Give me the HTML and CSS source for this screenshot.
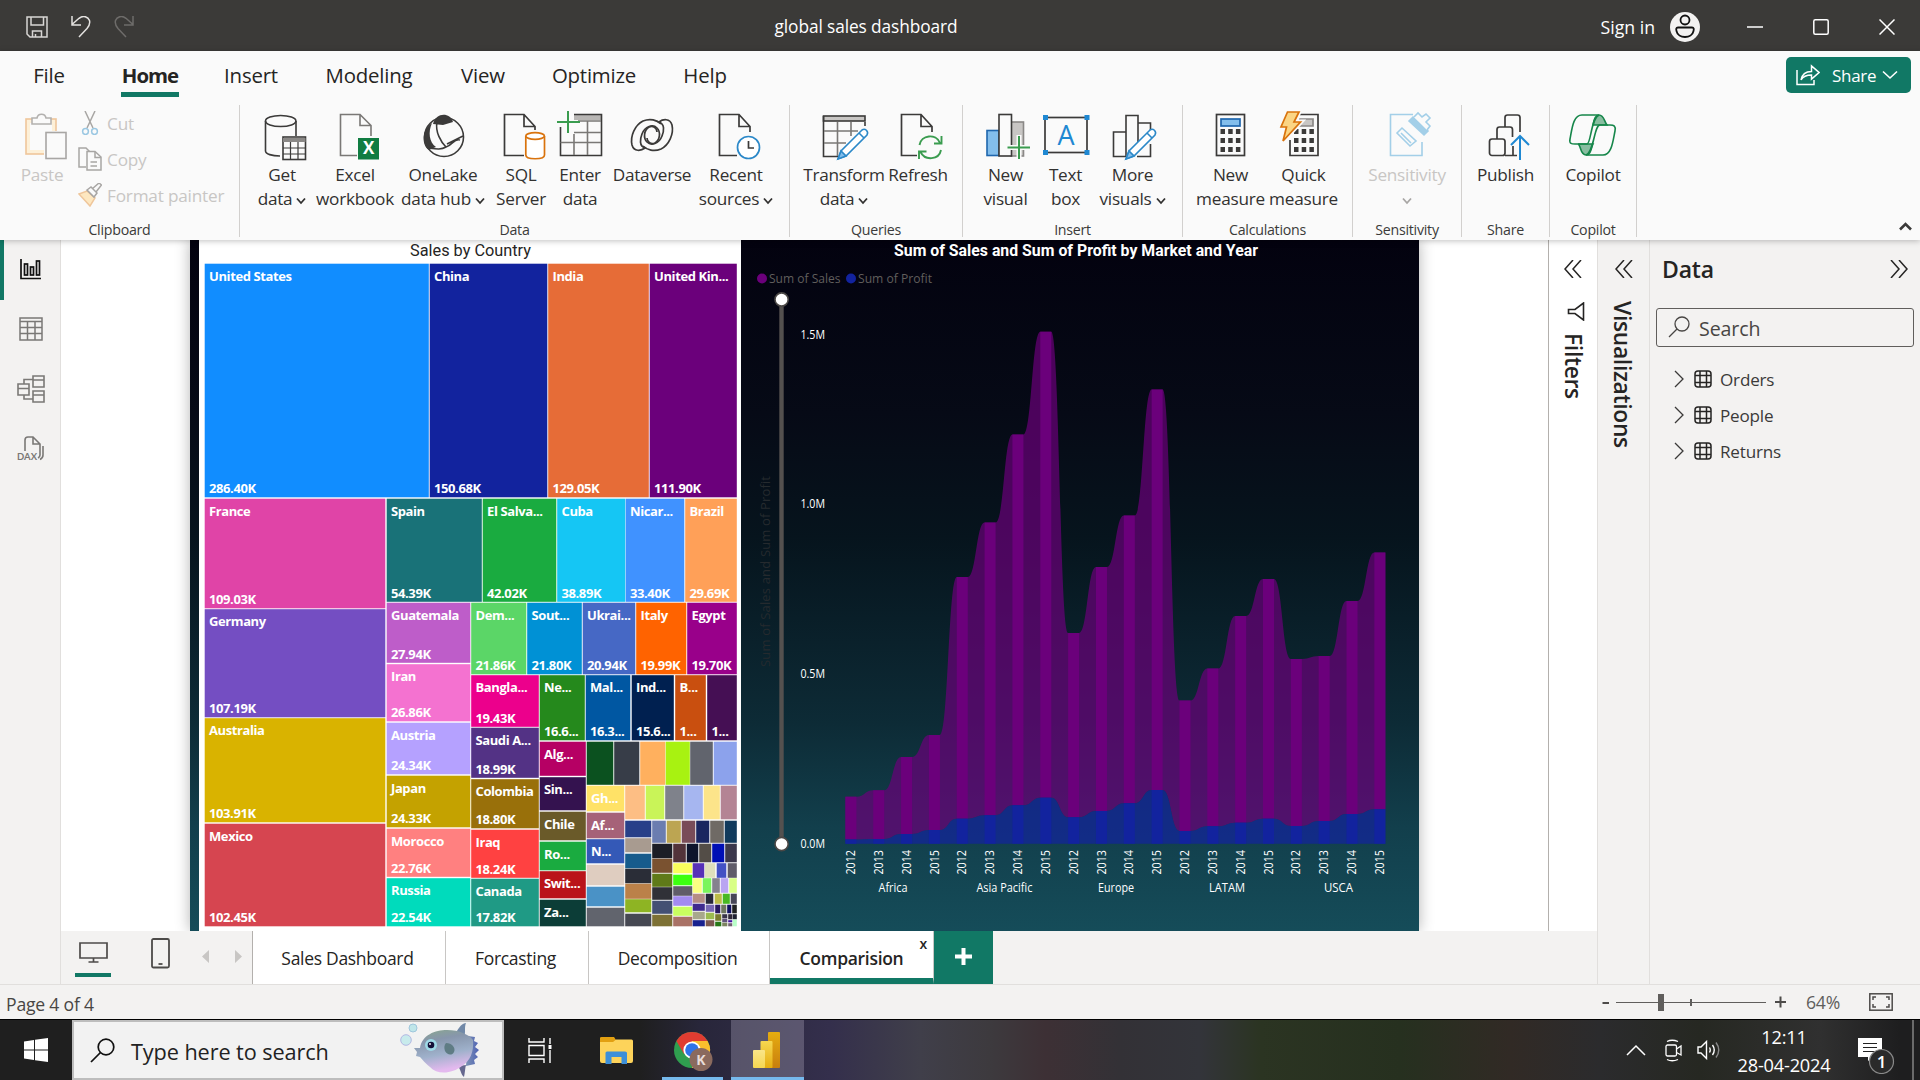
FILE: index.html
```html
<!DOCTYPE html>
<html lang="en">
<head>
<meta charset="utf-8">
<title>global sales dashboard</title>
<link rel="stylesheet" href="styles.css">
</head>
<body>
<svg class="defs" width="0" height="0">
  <symbol id="dbl" viewBox="0 0 18 18"><path d="M9 0L1 9L9 18M17 0L9 9L17 18" fill="none" stroke="#252423" stroke-width="1.5"/></symbol>
  <symbol id="chev" viewBox="0 0 10 8"><path d="M1 1.5L5 6L9 1.5" fill="none" stroke="currentColor" stroke-width="1.8"/></symbol>
  <symbol id="tbl" viewBox="0 0 18 18"><g fill="none" stroke="#252423" stroke-width="1.5"><rect x="1" y="1" width="16" height="16" rx="3"/><path d="M6 1V17M12.5 1V17M1 5.5H17M1 12.5H17"/></g></symbol>
</svg>

<header class="titlebar">
  <div class="quick">
    <svg width="22" height="22" viewBox="0 0 22 22" fill="none" stroke="#d8d6d4" stroke-width="1.5"><path d="M1 1H21V21H4L1 18ZM5 1V9H17.500V1M6.500 21V15H15.500V21M9.500 18V21"/></svg>
    <svg width="20" height="22" viewBox="0 0 20 22" fill="none" stroke="#e4e2e0" stroke-width="1.500"><path d="M1 0V9H10M1 8.500L8 2.300C12-1 17 .5 18.500 4.500C19.500 8 18 10 16 12.500L8 21"/></svg>
    <svg width="20" height="22" viewBox="0 0 20 22" fill="none" stroke="#6e6c6a" stroke-width="1.500"><path d="M19 0V9H10M19 8.500L12 2.300C8-1 3 .5 1.500 4.500C.5 8 2 10 4 12.500L12 21"/></svg>
  </div>
  <div class="doc-title">global sales dashboard</div>
  <div class="account">
    <span class="signin">Sign in</span>
    <svg width="30" height="30" viewBox="0 0 30 30"><circle cx="15" cy="15" r="15" fill="#f3f2f1"/><g fill="none" stroke="#111" stroke-width="1.800"><circle cx="15" cy="8" r="4.500"/><path d="M8 15.500H22C24 15.500 24 17 23.500 19C22 27 8 27 6.500 19C6 17 6 15.500 8 15.500Z"/></g></svg>
    <svg width="16" height="16" viewBox="0 0 16 16"><path d="M0 8H16" stroke="#fff" stroke-width="1.500"/></svg>
    <svg width="16" height="16" viewBox="0 0 16 16"><rect x=".8" y=".8" width="14.400" height="14.400" rx="1.500" fill="none" stroke="#fff" stroke-width="1.500"/></svg>
    <svg width="16" height="16" viewBox="0 0 16 16"><path d="M.5 .5L15.500 15.500M15.500 .5L.5 15.500" stroke="#fff" stroke-width="1.500"/></svg>
  </div>
</header>

<section class="ribbon">
  <nav class="tabs">
    <span class="tab t-file">File</span><span class="tab t-home">Home</span><span class="tab t-insert">Insert</span><span class="tab t-model">Modeling</span><span class="tab t-view">View</span><span class="tab t-opt">Optimize</span><span class="tab t-help">Help</span>
    <button class="share">
      <svg width="24" height="22" viewBox="0 0 24 22" fill="none" stroke="#fff" stroke-width="1.500"><path d="M1 6V20.500H18V16M5 16C6 10.500 9 7.500 15.500 7.500V2L23 8.500L15.500 15V11C10.500 11 7 12.500 5 16Z"/></svg>
      <span>Share</span>
      <svg width="16" height="10" viewBox="0 0 16 10"><path d="M1 1.500L8 8L15 1.500" fill="none" stroke="#fff" stroke-width="1.600"/></svg>
    </button>
  </nav>
  <div class="groups">
    <div class="group g-clip">
      <div class="items clip">
        <div class="item w-paste">
          <svg class="ico paste" viewBox="0 0 48 48" fill="none" stroke-width="1.600"><rect x="5" y="7" width="30" height="35" fill="#fdf0d8" stroke="#efc69b"/><rect x="9" y="11" width="22" height="27" fill="#fafafa"/><path d="M11 12V6H16C17 1 24 1 25 6H30V12Z" fill="#fafafa" stroke="#b3b1af"/><rect x="23" y="19" width="24" height="29" fill="#fafafa"/><rect x="25" y="20.500" width="20" height="26" fill="#fafafa" stroke="#a8a6a4"/></svg>
          <span>Paste</span>
        </div>
        <div class="clip-list">
          <div><svg width="24" height="24" viewBox="0 0 24 24" fill="none" stroke-width="1.500"><path d="M7 0L15 17M17 0L9 17" stroke="#a8a6a4"/><circle cx="7.500" cy="20.500" r="2.900" stroke="#9ac7e2"/><circle cx="16.500" cy="20.500" r="2.900" stroke="#9ac7e2"/></svg>Cut</div>
          <div><svg width="24" height="24" viewBox="0 0 24 24" fill="none" stroke="#a8a6a4" stroke-width="1.500"><path d="M8 20H1V1H8L12 5"/><path d="M9 4.500H17L23 10V23H9Z" fill="#fafafa"/><path d="M17 5V10.500H23M12.500 15H19M12.500 19H19"/></svg>Copy</div>
          <div><svg width="24" height="24" viewBox="0 0 24 24" fill="none" stroke-width="1.500"><path d="M1 11L9 8L17 15L12 23Z" fill="#fde7c0" stroke="#efc69b"/><path d="M9 7L13 4L19 10L16 14ZM14 6L21 0L23.500 2L18 9" fill="#fafafa" stroke="#a8a6a4"/></svg>Format painter</div>
        </div>
      </div>
      <div class="glabel">Clipboard</div>
    </div>
    <div class="group g-data">
      <div class="items">
        <div class="item w64"><svg class="ico" viewBox="0 0 48 48" fill="none" stroke="#3b3a39" stroke-width="1.600"><path d="M38 24V9M7.500 9V39C7.500 42 14 44 22 44"/><ellipse cx="22.700" cy="9" rx="15.200" ry="5.500"/><rect x="25" y="25" width="22.500" height="22.500" fill="#fafafa"/><path d="M25 28H47.500" stroke="#8a8886" stroke-width="4"/><path d="M25 36H47.500M25 42H47.500M32.500 30V47M40 30V47" stroke-width="1.200"/></svg><span>Get<br>data<svg class="dn"><use href="#chev"/></svg></span></div>
        <div class="item w82"><svg class="ico" viewBox="0 0 48 48" fill="none" stroke="#7a7876" stroke-width="1.600"><path d="M26 43.500H9.500V2.500H29L40 13.500V24M29 2.500V13.500H40"/><rect x="27" y="26" width="21" height="21.500" fill="#107c41" stroke="none"/><text x="37.500" y="42" class="xl">X</text></svg><span>Excel<br>workbook</span></div>
        <div class="item w94"><svg class="ico" viewBox="0 0 48 48"><path d="M14 12C17 0 31 0 34 10L24 13Z" fill="#3b3a39"/><path d="M13 11C3 17 2 33 10 38C14 36 17 35 17 35C10 30 9 20 13 11Z" fill="#3b3a39"/><g fill="none" stroke="#3b3a39" stroke-width="1.600"><circle cx="25" cy="25" r="19.500"/><path d="M18 10C16 20 22 30 27 35C34 33 35 26 41 28M9 36C17 37 22 38 27 35M28 32L44 24"/></g></svg><span>OneLake<br>data hub<svg class="dn"><use href="#chev"/></svg></span></div>
        <div class="item w62"><svg class="ico" viewBox="0 0 48 48" fill="none" stroke="#3b3a39" stroke-width="1.700"><path d="M27 43.500H7.500V2.500H27L38 14.500V18M27 2.500V14.500H38"/><g stroke="#d9730d" fill="#fff"><path d="M28.800 24V43C28.800 48 47.500 48 47.500 43V24"/><ellipse cx="38.100" cy="24" rx="9.300" ry="3.300"/></g></svg><span>SQL<br>Server</span></div>
        <div class="item w56"><svg class="ico" viewBox="0 0 48 48" fill="none" stroke="#3b3a39" stroke-width="1.600"><path d="M18 5.500H45" stroke="#b8b6b4" stroke-width="5"/><path d="M18 2.500H45.500V43.500H4.500V15"/><path d="M4.500 30.500H45M18 20.500H45M18 22V43M31.500 9V43M22 9H45" stroke="#7a7876"/><path d="M12 -1V21M1 10H24" stroke="#3a9c4f" stroke-width="2"/></svg><span>Enter<br>data</span></div>
        <div class="item w88"><svg class="ico" viewBox="0 0 48 48" fill="none" stroke="#3b3a39" stroke-width="1.700"><path d="M33 12C29 8 22 6 15 9C7 13 2 24 4 33C6 40 13 39 17 36C11 34 12 27 14 22C17 14 25 12 29 16C33 20 32 28 27 31C23 33 19 30 19 26"/><path d="M15 34C19 38 26 40 33 37C41 33 46 22 44 13C42 6 35 7 31 10C37 12 36 19 34 24C31 32 23 34 19 30C15 26 16 18 21 15C25 13 29 16 29 20"/></svg><span>Dataverse</span></div>
        <div class="item w80"><svg class="ico" viewBox="0 0 48 48" fill="none" stroke="#3b3a39" stroke-width="1.700"><path d="M25 43.500H7.500V2.500H27L38 14.500V20M27 2.500V14.500H38"/><circle cx="36.500" cy="35.500" r="11" stroke="#2b88c8" fill="#fff"/><path d="M36.500 29V36H42"/></svg><span>Recent<br>sources<svg class="dn"><use href="#chev"/></svg></span></div>
      </div>
      <div class="glabel">Data</div>
    </div>
    <div class="group g-query">
      <div class="items">
        <div class="item w84"><svg class="ico" viewBox="0 0 48 48" fill="none" stroke="#3b3a39" stroke-width="1.600"><rect x="3.500" y="4" width="41.500" height="5" fill="#c8c6c4"/><path d="M45 10V14M3.500 4V44.500H18"/><path d="M4 19H38M4 31H26M17.500 10V44M31 10V24" stroke="#7a7876"/><path d="M18 47L21 39L42 18C45 16 49 19 47 23L26 44Z" stroke="#2b88c8" fill="#fff"/><path d="M18 47L21 39L26 44Z" fill="#83beec" stroke="#2b88c8"/><path d="M39 21L44 26" stroke="#2b88c8"/></svg><span>Transform<br>data<svg class="dn"><use href="#chev"/></svg></span></div>
        <div class="item w64"><svg class="ico" viewBox="0 0 48 48" fill="none" stroke="#3b3a39" stroke-width="1.700"><path d="M23 43.500H7.500V2.500H27L38 14.500V20M27 2.500V14.500H38"/><path d="M25.500 33C27 23 42 21 46 31M47.500 24V31.500H40M47 38C45 48 31 49 26.500 40M25 47V39.500H32.500" stroke="#3a9c4f" stroke-width="1.900"/></svg><span>Refresh</span></div>
      </div>
      <div class="glabel">Queries</div>
    </div>
    <div class="group g-insert">
      <div class="items">
        <div class="item w60"><svg class="ico" viewBox="0 0 48 48" fill="none" stroke="#3b3a39" stroke-width="1.600"><rect x="29" y="10" width="12.500" height="34" fill="#c8c6c4" stroke="#8a8886"/><rect x="5" y="18.500" width="12" height="25" fill="#83beec" stroke="#1f66ad"/><rect x="17" y="2.500" width="12.500" height="41.500" fill="#fafafa"/><path d="M37 23V48M25 35.500H48" stroke="#fafafa" stroke-width="5"/><path d="M37 24V47M25.500 35.500H48" stroke="#3a9c4f" stroke-width="2"/></svg><span>New<br>visual</span></div>
        <div class="item w60"><svg class="ico" viewBox="0 0 48 48" fill="none" stroke="#3b3a39" stroke-width="1.700"><rect x="3" y="5.500" width="42" height="35"/><g fill="#1f88d2" stroke="none"><rect x="1" y="3" width="5" height="5"/><rect x="42.500" y="3" width="5" height="5"/><rect x="1" y="38" width="5" height="5"/><rect x="42.500" y="38" width="5" height="5"/></g><text x="24" y="33" class="ta">A</text></svg><span>Text<br>box</span></div>
        <div class="item w74"><svg class="ico" viewBox="0 0 48 48" fill="none" stroke="#3b3a39" stroke-width="1.600"><path d="M17 44.500H4.500V20H17M17 44V3.500H29V30M29 11H41.500V20M41.500 32V44.500H28"/><path d="M17 47L20 39L41 18C44 16 48 19 46 23L25 44Z" stroke="#2b88c8" fill="#fff"/><path d="M17 47L20 39L25 44Z" fill="#83beec" stroke="#2b88c8"/><path d="M38 21L43 26" stroke="#2b88c8"/></svg><span>More<br>visuals<svg class="dn"><use href="#chev"/></svg></span></div>
      </div>
      <div class="glabel">Insert</div>
    </div>
    <div class="group g-calc">
      <div class="items">
        <div class="item w72"><svg class="ico" viewBox="0 0 48 48" fill="none" stroke="#3b3a39" stroke-width="1.700"><rect x="9.500" y="2.500" width="28" height="41"/><rect x="14" y="7" width="19" height="7" fill="#83beec" stroke="#1f66ad"/><path d="M13.500 19.500H34M13.500 28.500H34M13.500 37.500H34" stroke-width="5" stroke-dasharray="4.500 3.200"/></svg><span>New<br>measure</span></div>
        <div class="item w74"><svg class="ico" viewBox="0 0 48 48" fill="none" stroke="#3b3a39" stroke-width="1.700"><path d="M20 2.500H38V43.500H10V28"/><path d="M20 7H33V14H18Z" fill="#c8c6c4" stroke="#8a8886"/><path d="M14 19.500H34.500M14 28.500H34.500M14 37.500H34.500" stroke-width="5" stroke-dasharray="4.500 3.200"/><path d="M7.500 0H19L14 10H20.500L3 29L6.500 15H1Z" fill="#fbd584" stroke="#fafafa" stroke-width="5"/><path d="M7.500 0H19L14 10H20.500L3 29L6.500 15H1Z" fill="#fbd584" stroke="#d9730d"/></svg><span>Quick<br>measure</span></div>
      </div>
      <div class="glabel">Calculations</div>
    </div>
    <div class="group g-sens">
      <div class="items">
        <div class="item off"><svg class="ico" viewBox="0 0 48 48" fill="none" stroke="#a3cfe8" stroke-width="1.600"><path d="M30 2.500H7.500V43.500H39V30"/><path d="M14 21L19 16L33 29L27 34ZM18 21L28 31"/><path d="M26 9L30 5L45 19L41 23Z" fill="#a3cfe8"/><path d="M31 5L35 1L39 5L43 2L47 6L43 10L47 14L44 18" fill="#fafafa"/></svg><span>Sensitivity<br><svg class="dn"><use href="#chev"/></svg></span></div>
      </div>
      <div class="glabel">Sensitivity</div>
    </div>
    <div class="group g-share">
      <div class="items">
        <div class="item"><svg class="ico" viewBox="0 0 48 48" fill="none" stroke="#3b3a39" stroke-width="1.700"><rect x="7.500" y="27" width="15.500" height="16.500" rx="2.500"/><path d="M15 27V17.500Q15 15 17.500 15H28Q30.500 15 30.500 17.500V25M23 15V5.500Q23 3 25.500 3H35.500Q38 3 38 5.500V20M23 43.500H35M31 34V43"/><path d="M38 48V24.500M29 33L38 24L47 33" stroke="#1f88d2" stroke-width="2"/></svg><span>Publish</span></div>
      </div>
      <div class="glabel">Share</div>
    </div>
    <div class="group g-cop">
      <div class="items">
        <div class="item"><svg class="ico" viewBox="0 0 48 48" fill="none" stroke="#16864a" stroke-width="1.600"><path d="M24 13C25 6 27 3 30 3C35 3 35 9 38 13Z" fill="#88bda0"/><path d="M9 32C12 33 11 43 17 43C22 43 22 36 24 32Z" fill="#88bda0"/><path d="M30 3H13C4 3 3 17 1 27C0 32 3 32 6 32H18C22 32 22 6 30 3ZM17 43H34C43 43 44 28 46 19C47 14 45 13 41 13H31C25 13 25 41 17 43Z"/></svg><span>Copilot</span></div>
      </div>
      <div class="glabel">Copilot</div>
    </div>
    <svg class="collapse" width="13" height="9" viewBox="0 0 13 9"><path d="M1 7.500L6.500 2L12 7.500" fill="none" stroke="#3b3a39" stroke-width="2.600"/></svg>
  </div>
</section>

<main class="work">
  <aside class="views">
    <div class="view on"><svg width="22" height="22" viewBox="0 0 22 22" fill="none" stroke="#111" stroke-width="1.700"><path d="M1 1V20.500H21"/><rect x="4.500" y="6" width="3" height="11"/><rect x="10.500" y="9" width="3" height="8"/><rect x="16.500" y="3" width="3" height="14"/></svg></div>
    <div class="view"><svg width="24" height="24" viewBox="0 0 24 24" fill="none" stroke="#7a7876" stroke-width="1.500"><path d="M1 1H23V23H1ZM1 4.500H23M1 10.500H23M1 16.500H23M8.500 4.500V23M16 4.500V23"/></svg></div>
    <div class="view"><svg width="28" height="28" viewBox="0 0 28 28" fill="none" stroke="#7a7876" stroke-width="1.600"><path d="M1 9H12V20H1ZM1 13.500H12M16 1H27V12H16ZM16 5H27M16 16H27V27H16ZM16 20H27M7 9V4.500H16M7 20V24H16"/></svg></div>
    <div class="view"><svg width="28" height="26" viewBox="0 0 28 26" fill="none" stroke="#7a7876" stroke-width="1.600"><path d="M8 15V4Q8 1 11 1H16L23 8V19Q23 21 21 22M16 1V8H23M26 10V19Q26 22 23 23.500"/><text x="0" y="24" class="dax" textLength="20">DAX</text></svg></div>
  </aside>

  <div class="center">
    <div class="stage">
      <div class="canvas">
        <div class="page">
          <svg id="treemap" class="treemap" viewBox="199 240 542 691" width="542" height="691">
            <text class="title" x="410" y="255.500" textLength="121" lengthAdjust="spacingAndGlyphs">Sales by Country</text>
          </svg>
          <svg id="ribbon-chart" class="areas" viewBox="742 240 677 691" width="677" height="691"></svg>
        </div>
      </div>
      <div class="filters">
        <svg width="18" height="18"><use href="#dbl"/></svg>
        <svg class="funnel" width="18" height="19" viewBox="0 0 18 19"><path d="M16.500 1V18L8 11.500H1.500V7.500H8Z" fill="none" stroke="#252423" stroke-width="1.600"/></svg>
        <span class="vert">Filters</span>
      </div>
    </div>
    <div class="pages">
      <div class="layouts">
        <div class="layout on"><svg width="29" height="21" viewBox="0 0 29 21" fill="none" stroke="#4d4b49" stroke-width="1.700"><path d="M1 1H28V16H1ZM14.500 16V20M9.500 20H19.500"/></svg></div>
        <div class="layout phone"><svg width="19" height="31" viewBox="0 0 19 31" fill="none" stroke="#4d4b49" stroke-width="1.800"><rect x="1" y="1" width="17" height="28.500" rx="1.500"/><path d="M7.500 26H11.500"/></svg></div>
        <svg class="arrows" width="40" height="13" viewBox="0 0 40 13"><path d="M7 0V13L0 6.500ZM33 0V13L40 6.500Z" fill="#c8c6c4"/></svg>
      </div>
      <div class="ptab p1">Sales Dashboard</div>
      <div class="ptab p2">Forcasting</div>
      <div class="ptab p3">Decomposition</div>
      <div class="ptab p4">Comparision<b class="close">x</b></div>
      <div class="add"><svg width="17" height="17" viewBox="0 0 17 17"><path d="M8.500 0V17M0 8.500H17" stroke="#fff" stroke-width="4"/></svg></div>
    </div>
  </div>

  <aside class="viz">
    <svg width="18" height="18"><use href="#dbl"/></svg>
    <span class="vert">Visualizations</span>
  </aside>

  <aside class="data">
    <div class="data-head"><h2>Data</h2><svg class="flip" width="18" height="18"><use href="#dbl"/></svg></div>
    <div class="search"><svg width="22" height="22" viewBox="0 0 22 22" fill="none" stroke="#484644" stroke-width="1.300"><circle cx="14" cy="8" r="7"/><path d="M9 13L1 21"/></svg>Search</div>
    <div class="trow"><svg width="10" height="18" viewBox="0 0 10 18"><path d="M1 1L9 9L1 17" fill="none" stroke="#3b3a39" stroke-width="1.300"/></svg><svg width="18" height="18"><use href="#tbl"/></svg>Orders</div>
    <div class="trow"><svg width="10" height="18" viewBox="0 0 10 18"><path d="M1 1L9 9L1 17" fill="none" stroke="#3b3a39" stroke-width="1.300"/></svg><svg width="18" height="18"><use href="#tbl"/></svg>People</div>
    <div class="trow"><svg width="10" height="18" viewBox="0 0 10 18"><path d="M1 1L9 9L1 17" fill="none" stroke="#3b3a39" stroke-width="1.300"/></svg><svg width="18" height="18"><use href="#tbl"/></svg>Returns</div>
  </aside>
</main>

<footer class="status">
  <span class="pageno">Page 4 of 4</span>
  <svg class="zoom" width="186" height="20" viewBox="1601 992 186 20"><path d="M1602.500 1003H1609M1775 1002H1786M1780.500 996.500V1007.500" stroke="#4d4b49" stroke-width="2"/><path d="M1616 1002.500H1766" stroke="#605e5c"/><rect x="1658" y="994" width="6" height="17" fill="#605e5c"/><rect x="1690" y="999" width="2" height="7" fill="#605e5c"/></svg>
  <span class="pct">64%</span>
  <svg width="24" height="18" viewBox="0 0 24 18" fill="none" stroke="#4d4b49" stroke-width="1.500"><rect x=".8" y=".8" width="22.400" height="16.400"/><path d="M4 7V4H7M17 4H20V7M20 11V14H17M7 14H4V11"/></svg>
</footer>

<div class="taskbar">
  <div class="start"><svg width="24" height="24" viewBox="0 0 24 24" fill="#fff"><path d="M0 3.500L10 2V11.500H0ZM11 1.800L24 0V11.500H11ZM0 12.500H10V22L0 20.500ZM11 12.500H24V24L11 22.200Z"/></svg></div>
  <div class="find">
    <svg width="25" height="25" viewBox="0 0 25 25" fill="none" stroke="#111" stroke-width="1.700"><circle cx="16" cy="9" r="7.800"/><path d="M10.500 14.500L1 24"/></svg>
    <span>Type here to search</span>
    <svg class="fish" width="80" height="56" viewBox="400 1022 80 56">
      <defs><linearGradient id="fb" x1="0" y1="0" x2=".25" y2="1"><stop offset="0" stop-color="#8aa88c"/><stop offset=".3" stop-color="#8796ac"/><stop offset=".65" stop-color="#9fb1cb"/><stop offset="1" stop-color="#e3b9ee"/></linearGradient><linearGradient id="ft"><stop offset="0" stop-color="#7d93b4"/><stop offset="1" stop-color="#4f62b5"/></linearGradient></defs>
      <path d="M455 1034C458 1030 460 1024 466 1023C464 1028 466 1032 464 1038Z" fill="#7189a8"/><path d="M458 1066C461 1070 461 1075 464 1077C465 1073 465 1068 466 1065Z" fill="#66688f"/>
      <path d="M468 1036L475 1037L474 1041L478 1043L475 1047L479 1050L475 1054L478 1057L474 1060L475 1064L466 1066Z" fill="url(#ft)"/>
      <path d="M420 1048C422 1035 435 1030 447 1030C459 1030 470 1035 473 1040C474 1052 470 1061 462 1066C452 1074 437 1075 430 1067C424 1062 421 1058 420 1057L416 1056L417 1052L414 1048Z" fill="url(#fb)"/>
      <path d="M446 1043C452 1043 456 1048 454 1052C452 1056 447 1055 445 1051C444 1048 444 1045 446 1043Z" fill="#5f7c84"/>
      <circle cx="431" cy="1045" r="6" fill="#9ed9e6"/><circle cx="431" cy="1045" r="3.300" fill="#141038"/><circle cx="430" cy="1044" r=".9" fill="#fff"/>
      <circle cx="413" cy="1028" r="4" fill="#bfe6e9" stroke="#9fc6dc"/><circle cx="406" cy="1040" r="5.300" fill="#c8ebec" stroke="#b3b8e3"/>
    </svg>
  </div>
  <div class="tv"><svg width="24" height="25" viewBox="0 0 24 25" fill="none" stroke="#fff" stroke-width="1.400"><path d="M1 0V4H16V0M1 25V21H16V25M1 7.500H16V17.500H1ZM22 0V6M22 12V25"/><path d="M22 7V11" stroke-width="3"/></svg></div>
  <div class="folder"><svg width="33" height="29" viewBox="0 0 33 29"><path d="M0 2Q0 1 1.500 1H14L16 4V8H0Z" fill="#e2a011"/><path d="M0 6H13L16 3.500H31.500Q33 3.500 33 5V25Q33 27 31 27H2Q0 27 0 25Z" fill="#fdd35a"/><path d="M5.500 28V17Q5.500 15.500 7 15.500H25Q27 15.500 27 17V28H21.500V21H11.500V28Z" fill="#3d8fd8"/></svg></div>
  <div class="chrome"><svg width="41" height="42" viewBox="672 1030 41 42"><circle cx="692" cy="1050" r="18" fill="#2f9e4f"/><path d="M692 1050L676.400 1041A18 18 0 0 1 707.600 1041Z" fill="#e03c31"/><path d="M692 1041H707.600A18 18 0 0 1 692 1068Z" fill="#fbc02d"/><path d="M676.400 1041L684 1054L692 1041Z" fill="#e03c31"/><circle cx="692" cy="1050" r="8.600" fill="#fff"/><circle cx="692" cy="1050" r="6.800" fill="#2f74e8"/><circle cx="701" cy="1059.500" r="11.500" fill="#8a6a5e"/><text x="701" y="1065" class="badgek">K</text></svg></div>
  <div class="pbi"><svg width="27" height="36" viewBox="0 0 27 36"><defs><linearGradient id="pa" x1="0" y1="0" x2="0" y2="1"><stop offset="0" stop-color="#e6ad10"/><stop offset="1" stop-color="#c87e0e"/></linearGradient><linearGradient id="pb" x1="0" y1="0" x2="0" y2="1"><stop offset="0" stop-color="#f6d751"/><stop offset="1" stop-color="#e6ad10"/></linearGradient><linearGradient id="pc" x1="0" y1="0" x2="0" y2="1"><stop offset="0" stop-color="#f9e589"/><stop offset="1" stop-color="#f6d751"/></linearGradient></defs><rect x="15" width="12" height="36" rx="1" fill="url(#pa)"/><rect x="7.500" y="9" width="12" height="27" rx="1" fill="url(#pb)"/><rect y="18" width="12" height="18" rx="1" fill="url(#pc)"/></svg></div>
  <div class="tray">
    <svg width="22" height="13" viewBox="0 0 22 13"><path d="M2 11L11 2L20 11" fill="none" stroke="#fff" stroke-width="1.500"/></svg>
    <svg class="cam" width="17" height="23" viewBox="0 0 17 23" fill="none" stroke="#fff" stroke-width="1.300"><rect x="1" y="6" width="10.500" height="11" rx="1.500"/><path d="M11.500 10L16 7V16L11.500 13.500M2 2.500Q7 0 13 2.500M2 20.500Q7 23 13 20.500"/></svg>
    <svg width="24" height="20" viewBox="0 0 24 20" fill="none" stroke="#fff" stroke-width="1.400"><path d="M1 7H4L9.500 1.500V18.500L4 13H1ZM12.500 7.500Q14 10 12.500 12.500M15.500 5Q19 10 15.500 15"/><path d="M19 2.500Q24.500 10 19 17.500" stroke="#888"/></svg>
    <div class="clock"><span>12:11</span><span>28-04-2024</span></div>
    <svg class="note" width="38" height="38" viewBox="1857 1036 38 38"><path d="M1858 1038H1882V1057H1873L1868 1061V1057H1858Z" fill="#fff"/><path d="M1863 1043.500H1877M1863 1047.500H1877M1863 1051.500H1877" stroke="#222" stroke-width="1.200"/><circle cx="1881.500" cy="1061.500" r="12" fill="#2a2a2a" stroke="#8a8a8a" stroke-width="1.200"/><text x="1881.500" y="1067.500" class="one">1</text></svg>
  </div>
  <div class="desk"></div>
</div>
<script src="script.js"></script>
</body>
</html>
```
FILE: styles.css
```css
* { box-sizing: border-box; }
body { margin: 0; width: 1920px; height: 1080px; overflow: hidden; display: flex; flex-direction: column; font-family: "Open Sans", "Noto Sans", sans-serif; color: #252423; background: #f3f2f1; }
svg { display: block; flex: none; }
.defs { display: none; }

.titlebar { height: 51px; flex: none; background: #3b3a38; color: #fff; display: grid; grid-template-columns: 766px 200px 1fr; align-items: center; padding-top: 2px; }
.quick { display: flex; gap: 23px; padding-left: 26px; }
.doc-title { text-align: center; font-size: 17.3px; letter-spacing: -.1px; white-space: nowrap; }
.account { display: flex; justify-content: flex-end; align-items: center; padding-right: 25px; }
.signin { font-size: 17.7px; margin-right: 15px; }
.account svg + svg { margin-left: 50px; }
.account svg:nth-of-type(2) { margin-left: 47px; }

.ribbon { height: 189px; flex: none; background: #fafafa; display: flex; flex-direction: column; box-shadow: 0 1px 6px rgba(0,0,0,.25); position: relative; z-index: 2; }
.tabs { height: 48px; display: flex; align-items: center; padding: 0 9px 0 0; font-size: 20.4px; letter-spacing: -.2px; }
.tab { text-align: center; height: 44px; line-height: 44px; white-space: nowrap; display: flex; justify-content: center; }
.t-file { margin-left: 32px; width: 34px; }
.t-home { margin-left: 55px; width: 58px; font-weight: 700; letter-spacing: -1px; border-bottom: 5px solid #117865; }
.t-insert { margin-left: 43px; width: 58px; }
.t-model { margin-left: 40px; width: 98px; }
.t-view { margin-left: 40px; width: 50px; }
.t-opt { margin-left: 41px; width: 90px; }
.t-help { margin-left: 41px; width: 50px; }
.share { margin-left: auto; width: 125px; height: 36px; border: 0; border-radius: 5px; background: #117865; color: #fff; font: 17px "Open Sans", sans-serif; letter-spacing: -.3px; display: flex; align-items: center; padding: 0 12px 0 10px; }
.share span { margin: 0 6px 0 12px; }

.groups { flex: 1; display: flex; padding: 6px 0 3px; position: relative; }
.group { border-right: 1px solid #d2d0ce; display: flex; flex-direction: column; }
.g-clip { width: 240px; } .g-data { width: 550px; } .g-query { width: 173px; } .g-insert { width: 220px; }
.g-calc { width: 170px; } .g-sens { width: 109px; } .g-share { width: 88px; } .g-cop { width: 87px; }
.items { flex: 1; display: flex; justify-content: center; padding-top: 7px; }
.g-data .items { justify-content: flex-start; padding-left: 10px; }
.item { display: flex; flex-direction: column; align-items: center; font-size: 17.2px; line-height: 24px; text-align: center; white-space: nowrap; letter-spacing: -.25px; color: #323130; }
.ico { width: 48px; height: 48px; overflow: visible; margin-bottom: 3px; }
.ico.paste { position: relative; left: 3px; }
.item > span { display: block; }
.item .dn { display: inline-block; width: 10px; height: 8px; margin-left: 4px; vertical-align: 0; color: #323130; }
.w56 { width: 56px; } .w60 { width: 60px; } .w62 { width: 62px; } .w64 { width: 64px; } .w72 { width: 72px; } .w74 { width: 74px; }
.w80 { width: 80px; } .w82 { width: 82px; } .w84 { width: 84px; } .w88 { width: 88px; } .w94 { width: 94px; }
.item.off, .w-paste { color: #c8c6c4; }
.item.off .dn { color: #a8a6a4; margin: 0; }
.glabel { height: 26px; line-height: 28px; font-size: 14.2px; letter-spacing: -.25px; text-align: center; color: #3b3a39; margin-bottom: -5px; }
.items.clip { justify-content: flex-start; padding-left: 18px; }
.w-paste { width: 48px; }
.clip-list { display: flex; flex-direction: column; margin: -7px 0 0 12px; color: #c8c6c4; font-size: 17.2px; letter-spacing: -.2px; }
.clip-list div { height: 36px; display: flex; align-items: center; gap: 5px; white-space: nowrap; }
.collapse { position: absolute; right: 8px; bottom: 9px; }
.xl { font: 700 17px "Open Sans", sans-serif; fill: #fff; stroke: none; text-anchor: middle; }
.ta { font: 27px "Open Sans", sans-serif; fill: #1f88d2; stroke: none; text-anchor: middle; }
.dax { font: 700 9.5px Lato, sans-serif; fill: #7a7876; stroke: none; }

.work { height: 744px; flex: none; display: flex; }
.views { width: 61px; border-right: 1px solid #e1dfdd; background: #f3f2f1; }
.view { height: 60px; display: flex; align-items: center; justify-content: center; padding: 0 2px 2px 0; border-left: 4px solid transparent; }
.view.on { border-color: #117865; }
.center { width: 1537px; display: flex; flex-direction: column; border-right: 1px solid #e1dfdd; }
.stage { height: 691px; display: flex; }
.canvas { width: 1488px; background: #fff; border-right: 1px solid #b3b0ad; padding-left: 129px; overflow: hidden; }
.page { width: 1229px; height: 691px; padding-left: 9px; display: flex; gap: 1px; background: linear-gradient(#03020f 0%, #060a16 25%, #06141d 43%, #0d2b36 70%, #123f4c 85%, #154c59 100%); box-shadow: 0 0 14px rgba(0,0,0,.3); }
.treemap { background: #fff; }
.filters { width: 48px; background: #fff; display: flex; flex-direction: column; align-items: center; padding: 20px 0 0 0; }
.funnel { margin: 24px 0 12px 5px; }
.vert { writing-mode: vertical-rl; font-weight: 600; font-size: 22.8px; line-height: 26px; letter-spacing: -.3px; white-space: nowrap; }
.filters .vert { margin-right: 1px; }
.viz { width: 52px; border-right: 1px solid #e1dfdd; display: flex; flex-direction: column; align-items: center; padding: 20px 0 0 0; }
.viz .vert { margin: 23px 3px 0 0; }
.data { flex: 1; padding: 0 6px 0 6px; }
.data-head { display: flex; justify-content: space-between; align-items: center; height: 60px; padding: 0 6px 2px 6px; }
.data-head h2 { margin: 0; font-size: 23px; font-weight: 600; letter-spacing: -.2px; }
.flip { transform: scaleX(-1); }
.search { margin: 8px 0 14px; height: 39px; border: 1px solid #605e5c; border-radius: 3px; display: flex; align-items: center; gap: 9px; padding: 1px 0 0 11px; font-size: 19.6px; letter-spacing: -.1px; color: #484644; }
.search svg { margin-bottom: 3px; }
.trow { height: 36px; display: flex; align-items: center; font-size: 17.1px; letter-spacing: -.2px; padding-left: 18px; color: #3b3a39; }
.trow svg + svg { margin: 0 8px 0 10px; }

.pages { height: 53px; display: flex; background: #f3f2f1; font-size: 17.5px; letter-spacing: -.3px; }
.layouts { width: 192px; border-right: 1px solid #b3b0ad; display: flex; padding-left: 14px; }
.layout { width: 36px; height: 46px; display: flex; justify-content: center; padding-top: 11px; }
.layout.on { border-bottom: 4px solid #117865; }
.layout.phone { margin-left: 31px; padding-top: 7px; }
.arrows { margin: 19px 0 0 24px; }
.ptab { background: #fff; border-right: 1px solid #c8c6c4; display: flex; align-items: center; justify-content: center; padding: 1px 3px 0 0; position: relative; }
.p1 { width: 193px; } .p2 { width: 143px; } .p3 { width: 181px; } .p4 { width: 164px; }
.p4 { font-weight: 600; border-bottom: 6px solid #117865; padding: 7px 0 0; }
.close { position: absolute; right: 6px; top: 3px; font-size: 14px; font-weight: 600; }
.add { width: 59px; background: #117865; display: flex; align-items: center; justify-content: center; padding-bottom: 2px; }

.status { height: 35px; flex: none; border-top: 1px solid #e1dfdd; display: flex; align-items: center; padding: 0 27px 0 6px; font-size: 17.6px; letter-spacing: -.2px; color: #484644; }
.pageno { padding-top: 3px; }
.zoom { margin-left: auto; }
.pct { width: 82px; padding-left: 19px; color: #605e5c; }

.taskbar { height: 61px; flex: none; border-top: 1px solid #000; display: flex; color: #fff; background: linear-gradient(90deg, #1f1f1f 0, #1f1f1f 640px, #28263a 700px, #342f4c 830px, #403f4a 920px, #3d3a3e 990px, #3d3035 1045px, #333136 1120px, #33343a 1200px, #2b3422 1260px, #26301f 1400px, #312a25 1510px, #2b2b2d 1600px, #262822 1700px, #303030 1820px, #1e1e1f 1900px); }
.start { width: 72px; display: flex; align-items: center; padding-left: 24px; }
.find { width: 432px; border: 2px solid #bdbdbd; background: #f2f2f2; color: #222; display: flex; align-items: center; padding-left: 16px; font-size: 21.7px; letter-spacing: -.1px; white-space: nowrap; }
.find span { margin: 2px 0 0 16px; }
.fish { margin-left: auto; margin-right: 22px; }
.tv { width: 96px; display: flex; align-items: center; padding-left: 24px; }
.folder { width: 62px; display: flex; align-items: center; }
.chrome { width: 61px; border-bottom: 3px solid #76b9ed; padding: 10px 0 0 10px; }
.pbi { margin-left: 8px; width: 73px; background: rgba(160,155,175,.38); border-bottom: 3px solid #76b9ed; padding: 12px 0 0 22px; }
.badgek { font: 700 14px "Open Sans", sans-serif; fill: #e8dcd8; text-anchor: middle; }
.tray { flex: 1; display: flex; align-items: center; justify-content: flex-end; padding-right: 17px; }
.cam { margin: 0 15px 0 18px; }
.clock { width: 128px; font-size: 18.2px; line-height: 28px; text-align: center; display: flex; flex-direction: column; letter-spacing: -.2px; padding: 1px 2px 0 0; }
.note { margin-left: 8px; margin-top: 10px; }
.one { font: 600 17px "Open Sans", sans-serif; fill: #fff; text-anchor: middle; }
.desk { width: 8px; border-left: 2px solid #6a6a6a; }

.title { font: 16px "Roboto", sans-serif; fill: #252423; }
.title.inv { font-weight: 700; fill: #fff; font-size: 16.5px; }
.tile { font: 700 13px "Open Sans", sans-serif; fill: #fff; letter-spacing: -.4px; }
.legend { font: 13.5px "Open Sans", sans-serif; fill: #605e5c; }
.axis { font: 12px "Open Sans", sans-serif; fill: #fff; }
.ytitle { font: 13px "Open Sans", sans-serif; fill: #252a2e; }
```
FILE: script.js
```js
const NS = 'http://www.w3.org/2000/svg';
function add(parent, tag, attrs, text) {
  const el = document.createElementNS(NS, tag);
  for (const k in attrs) el.setAttribute(k, attrs[k]);
  if (text) el.textContent = text;
  parent.appendChild(el);
  return el;
}

// Treemap tiles: left, top, right, bottom, colour, name, value
const tiles = [
  [205,264,428.5,497,'#118dff','United States','286.40K'],[430,264,547,497,'#12239e','China','150.68K'],[548.5,264,648.5,497,'#e66c37','India','129.05K'],[650,264,736.5,497,'#6b007b','United Kin...','111.90K'],
  [205,499,385,608,'#e044a7','France','109.03K'],[205,609.5,385,717,'#744ec2','Germany','107.19K'],[205,718.5,385,822,'#d9b300','Australia','103.91K'],[205,824,385,926,'#d64550','Mexico','102.45K'],
  [387,499,481.5,601.5,'#197278','Spain','54.39K'],[483,499,556,601.5,'#1aab40','El Salva...','42.02K'],[557.5,499,625,601.5,'#15c6f4','Cuba','38.89K'],[626,499,684,601.5,'#4092ff','Nicar...','33.40K'],[685.5,499,736.5,601.5,'#ffa058','Brazil','29.69K'],
  [387,603,470,662.5,'#be5dc9','Guatemala','27.94K'],[387,664.5,470,721,'#f472d0','Iran','26.86K'],[387,723,470,774,'#b5a1ff','Austria','24.34K'],[387,776,470,827,'#c4a200','Japan','24.33K'],[387,829,470,876.5,'#ff8080','Morocco','22.76K'],[387,878.5,470,926,'#00dbbc','Russia','22.54K'],
  [471.5,603,526,674,'#5bd667','Dem...','21.86K'],[527.5,603,581.5,674,'#0091d5','Sout...','21.80K'],[583,603,635,674,'#4668c5','Ukrai...','20.94K'],[636.5,603,686,674,'#ff6300','Italy','19.99K'],[687.5,603,736.5,674,'#99008a','Egypt','19.70K'],
  [471.5,675.5,538.5,726.5,'#ec008c','Bangla...','19.43K'],[471.5,728,538.5,777.5,'#533285','Saudi A...','18.99K'],[471.5,779.5,538.5,828,'#99700a','Colombia','18.80K'],[471.5,830,538.5,877.5,'#ff4141','Iraq','18.24K'],[471.5,879,538.5,926,'#1f9a85','Canada','17.82K'],
  [540,675.5,584.5,740,'#25891c','Ne...','16.6...'],[586,675.5,630,740,'#0057a2','Mal...','16.3...'],[632,675.5,673.5,740,'#002050','Ind...','15.6...'],[675.5,675.5,705.5,740,'#c94f0f','B...','1...'],[707.5,675.5,736.5,740,'#450f54','','1...'],
  [540,742,585.5,775.5,'#b60064','Alg...'],[540,777.5,585.5,810,'#34124f','Sin...'],[540,812,585.5,840,'#6a5a29','Chile'],[540,842,585.5,870,'#1aab40','Ro...'],[540,871.5,585.5,898,'#ba141a','Swit...'],[540,900,585.5,926,'#0c3d37','Za...'],
  [587,742,613,784.5,'#0b511f'],[614.5,742,639,784.5,'#373d48'],[640.5,742,665,784.5,'#ffb05e'],[666,742,689.5,784.5,'#a8f211'],[690.5,742,712.5,784.5,'#61646d'],[714,742,736.5,784.5,'#8ca2ec'],
  [587,786,624,811,'#ffe267','Gh...'],[587,813,624,838,'#a66278','Af...'],[587,839.5,624,863,'#3459b7','N...'],[587,865,624,885,'#dfcdc0'],[587,887,624,906,'#4a92c6'],[587,908,624,926,'#61646d'],
  [625.5,786,644.5,819,'#fdbe84'],[646,786,664,819,'#c9f458'],[665.5,786,683,819,'#7f828b'],[684.5,786,702.5,819,'#a6b6f0'],[704,786,719.5,819,'#fce48a'],[721,786,736.5,819,'#b48494'],
  [625.5,821,651,837,'#284089'],[625.5,838.5,651,852,'#a89b90'],[625.5,854,651,868,'#165b8c'],[625.5,869,651,883,'#2a2d37'],[625.5,884,651,898.5,'#bb8149'],[625.5,899.5,651,912,'#8eb423'],[625.5,914,651,926,'#464852'],
  [652.5,821,665.5,842.5,'#6b7db0'],[667,821,680.5,842.5,'#bca552'],[682,821,695,842.5,'#794c58'],[696.5,821,709,842.5,'#1a2660'],[710.5,821,723.5,842.5,'#6f6a65'],[725,821,736.5,842.5,'#113a5c'],
  [652.5,844,672,858,'#1c1e26'],[652.5,859,672,872.5,'#7a5230'],[652.5,874,672,886.5,'#5f7a18'],[652.5,887.5,672,899.5,'#303137'],[652.5,901,672,913.5,'#435073'],[652.5,915,672,926,'#7d7135'],
  [673.5,844,685.5,862,'#52333a'],[687,844,698,862,'#0d142c'],[699.5,844,711,862,'#534d47'],[712.5,844,724,862,'#000fb5'],[725.5,844,736.5,862,'#3c384c'],
  [673.5,863.5,692,873,'#faff5c'],[673.5,875,692,885,'#3cff10'],[673.5,886.5,692,895.5,'#605c69'],[673.5,896.5,692,905.5,'#a38bf0'],[673.5,907,692,915.5,'#c9ff60'],[673.5,917,692,926,'#a97266'],
  [693,863.5,704,877.5,'#5731b7'],[705,863.5,715,877.5,'#dfe0bc'],[717,863.5,726,877.5,'#4351c4'],[728,863.5,736.5,877.5,'#605c69'],
  [693,878.5,701.5,892.5,'#fbff82'],[703,878.5,711,892.5,'#7bf55c'],[712.5,878.5,719.5,892.5,'#85828e'],[721,878.5,728,892.5,'#b9a5f2'],[729.5,878.5,736.5,892.5,'#d9ff86'],
  [693,894,704.5,902.5,'#b68d85'],[693,904,704.5,910.5,'#402a8f'],[693,912,704.5,919,'#a8a88c'],[693,920.5,704.5,926,'#18218f'],
  [706,894,713,903.5,'#28283a'],[715,894,721.5,903.5,'#bcbc48'],[723,894,729.5,903.5,'#48b823'],[731,894,736.5,903.5,'#484658'],
  [706,905,714,911.5,'#7868b4'],[706,913,714,919,'#9cbc50'],[706,920.5,714,926,'#7c5850'],
  [715.5,905,720,913,'#281860'],[721.5,905,726,913,'#707860'],[727.5,905,731,913,'#101060'],[732.5,905,736.5,913,'#202020'],
  [715.5,914.5,721,920.5,'#7a7c30'],[715.5,922,721,926,'#287818'],
  [722.5,914.5,727,918,'#383448'],[722.5,919,727,922,'#605478'],[722.5,923,727,926,'#7c8460'],
  [728.5,914.5,732,919,'#302838'],[728.5,920.5,732,922,'#4010a0'],[728.5,923.5,732,926,'#706070'],
  [733,914.5,736.5,919,'#202030'],[733,920,736.5,926,'#b8ffc8']
];
const map = document.getElementById('treemap');
for (const [l, t, r, b, fill, name, value] of tiles) {
  add(map, 'rect', { x: l - .3, y: t - .3, width: r - l + .6, height: b - t + .6, fill });
  if (name) add(map, 'text', { x: l + 4, y: t + 16.5, class: 'tile' }, name);
  if (value) add(map, 'text', { x: l + 4, y: b - 4, class: 'tile' }, value);
}

// Ribbon chart: sales and profit heights for each market and year
const chart = document.getElementById('ribbon-chart');
const sales = [796.7,790.3,757,735,577,522.5,434.5,331.7,633,567,515.5,389.5,700.5,668.5,616,579,659,656,601,552.5];
const profit = [839.5,839,834,830,818.7,815.3,805.3,797.7,817.3,811,803.3,790,831,826.3,822.7,818.7,826,821,814,809.3];
const base = 843.7, x0 = 845.4, step = 27.84, bw = 11;
function band(top, bottom, fill, opacity) {
  const edge = (ys) => {
    let d = '';
    ys.forEach((y, i) => {
      const x = x0 + step * i;
      if (i) { const px = x - step + bw, m = (px + x) / 2; d += `C${m} ${ys[i - 1]} ${m} ${y} ${x} ${y}`; }
      else d += `${x} ${y}`;
      d += `L${x + bw} ${y}`;
    });
    return d;
  };
  const n = bottom.length - 1;
  let d = 'M' + edge(top) + `L${x0 + step * n + bw} ${bottom[n]}`;
  for (let i = n; i >= 0; i--) {
    const x = x0 + step * i;
    d += `L${x} ${bottom[i]}`;
    if (i) { const px = x - step + bw, m = (px + x) / 2; d += `C${m} ${bottom[i]} ${m} ${bottom[i - 1]} ${px} ${bottom[i - 1]}`; }
  }
  add(chart, 'path', { d: d + 'Z', fill, 'fill-opacity': opacity });
  top.forEach((y, i) => add(chart, 'rect', { x: x0 + step * i, y, width: bw, height: bottom[i] - y, fill }));
}
add(chart, 'text', { class: 'title inv', x: 894, y: 255.5, textLength: 364, lengthAdjust: 'spacingAndGlyphs' }, 'Sum of Sales and Sum of Profit by Market and Year');
[[762, '#6b007b', 'Sum of Sales', 71.5], [851, '#12239e', 'Sum of Profit', 74]].forEach(([x, fill, label, w]) => {
  add(chart, 'circle', { cx: x, cy: 278.5, r: 5, fill });
  add(chart, 'text', { class: 'legend', x: x + 7, y: 283, textLength: w, lengthAdjust: 'spacingAndGlyphs' }, label);
});
add(chart, 'text', { class: 'ytitle', transform: 'translate(769.5 667) rotate(-90)', textLength: 191 }, 'Sum of Sales and Sum of Profit');
add(chart, 'rect', { x: 779.3, y: 300, width: 4.4, height: 544, fill: '#54514f' });
[299.5, 844].forEach(cy => add(chart, 'circle', { cx: 781.6, cy, r: 6.6, fill: '#fff', stroke: '#4a4745', 'stroke-width': 1.6 }));
band(sales, profit, '#6b007b', .7);
band(profit, profit.map(() => base), '#12239e', .7);
[['1.5M', 334.5], ['1.0M', 503.5], ['0.5M', 673.5], ['0.0M', 843.3]].forEach(([t, y]) =>
  add(chart, 'text', { class: 'axis', x: 800.5, y: y + 4.5, textLength: 24.5, lengthAdjust: 'spacingAndGlyphs' }, t));
for (let i = 0; i < 20; i++) {
  add(chart, 'text', { class: 'axis', transform: `translate(${x0 + step * i + 9.6} 874.5) rotate(-90)`, textLength: 24.5, lengthAdjust: 'spacingAndGlyphs' }, String(2012 + i % 4));
}
[['Africa', 893, 29], ['Asia Pacific', 1004.4, 56], ['Europe', 1116, 36], ['LATAM', 1227, 36], ['USCA', 1338.5, 29]].forEach(([t, x, w]) =>
  add(chart, 'text', { class: 'axis', x: x - w / 2, y: 892.3, textLength: w, lengthAdjust: 'spacingAndGlyphs' }, t));
```
